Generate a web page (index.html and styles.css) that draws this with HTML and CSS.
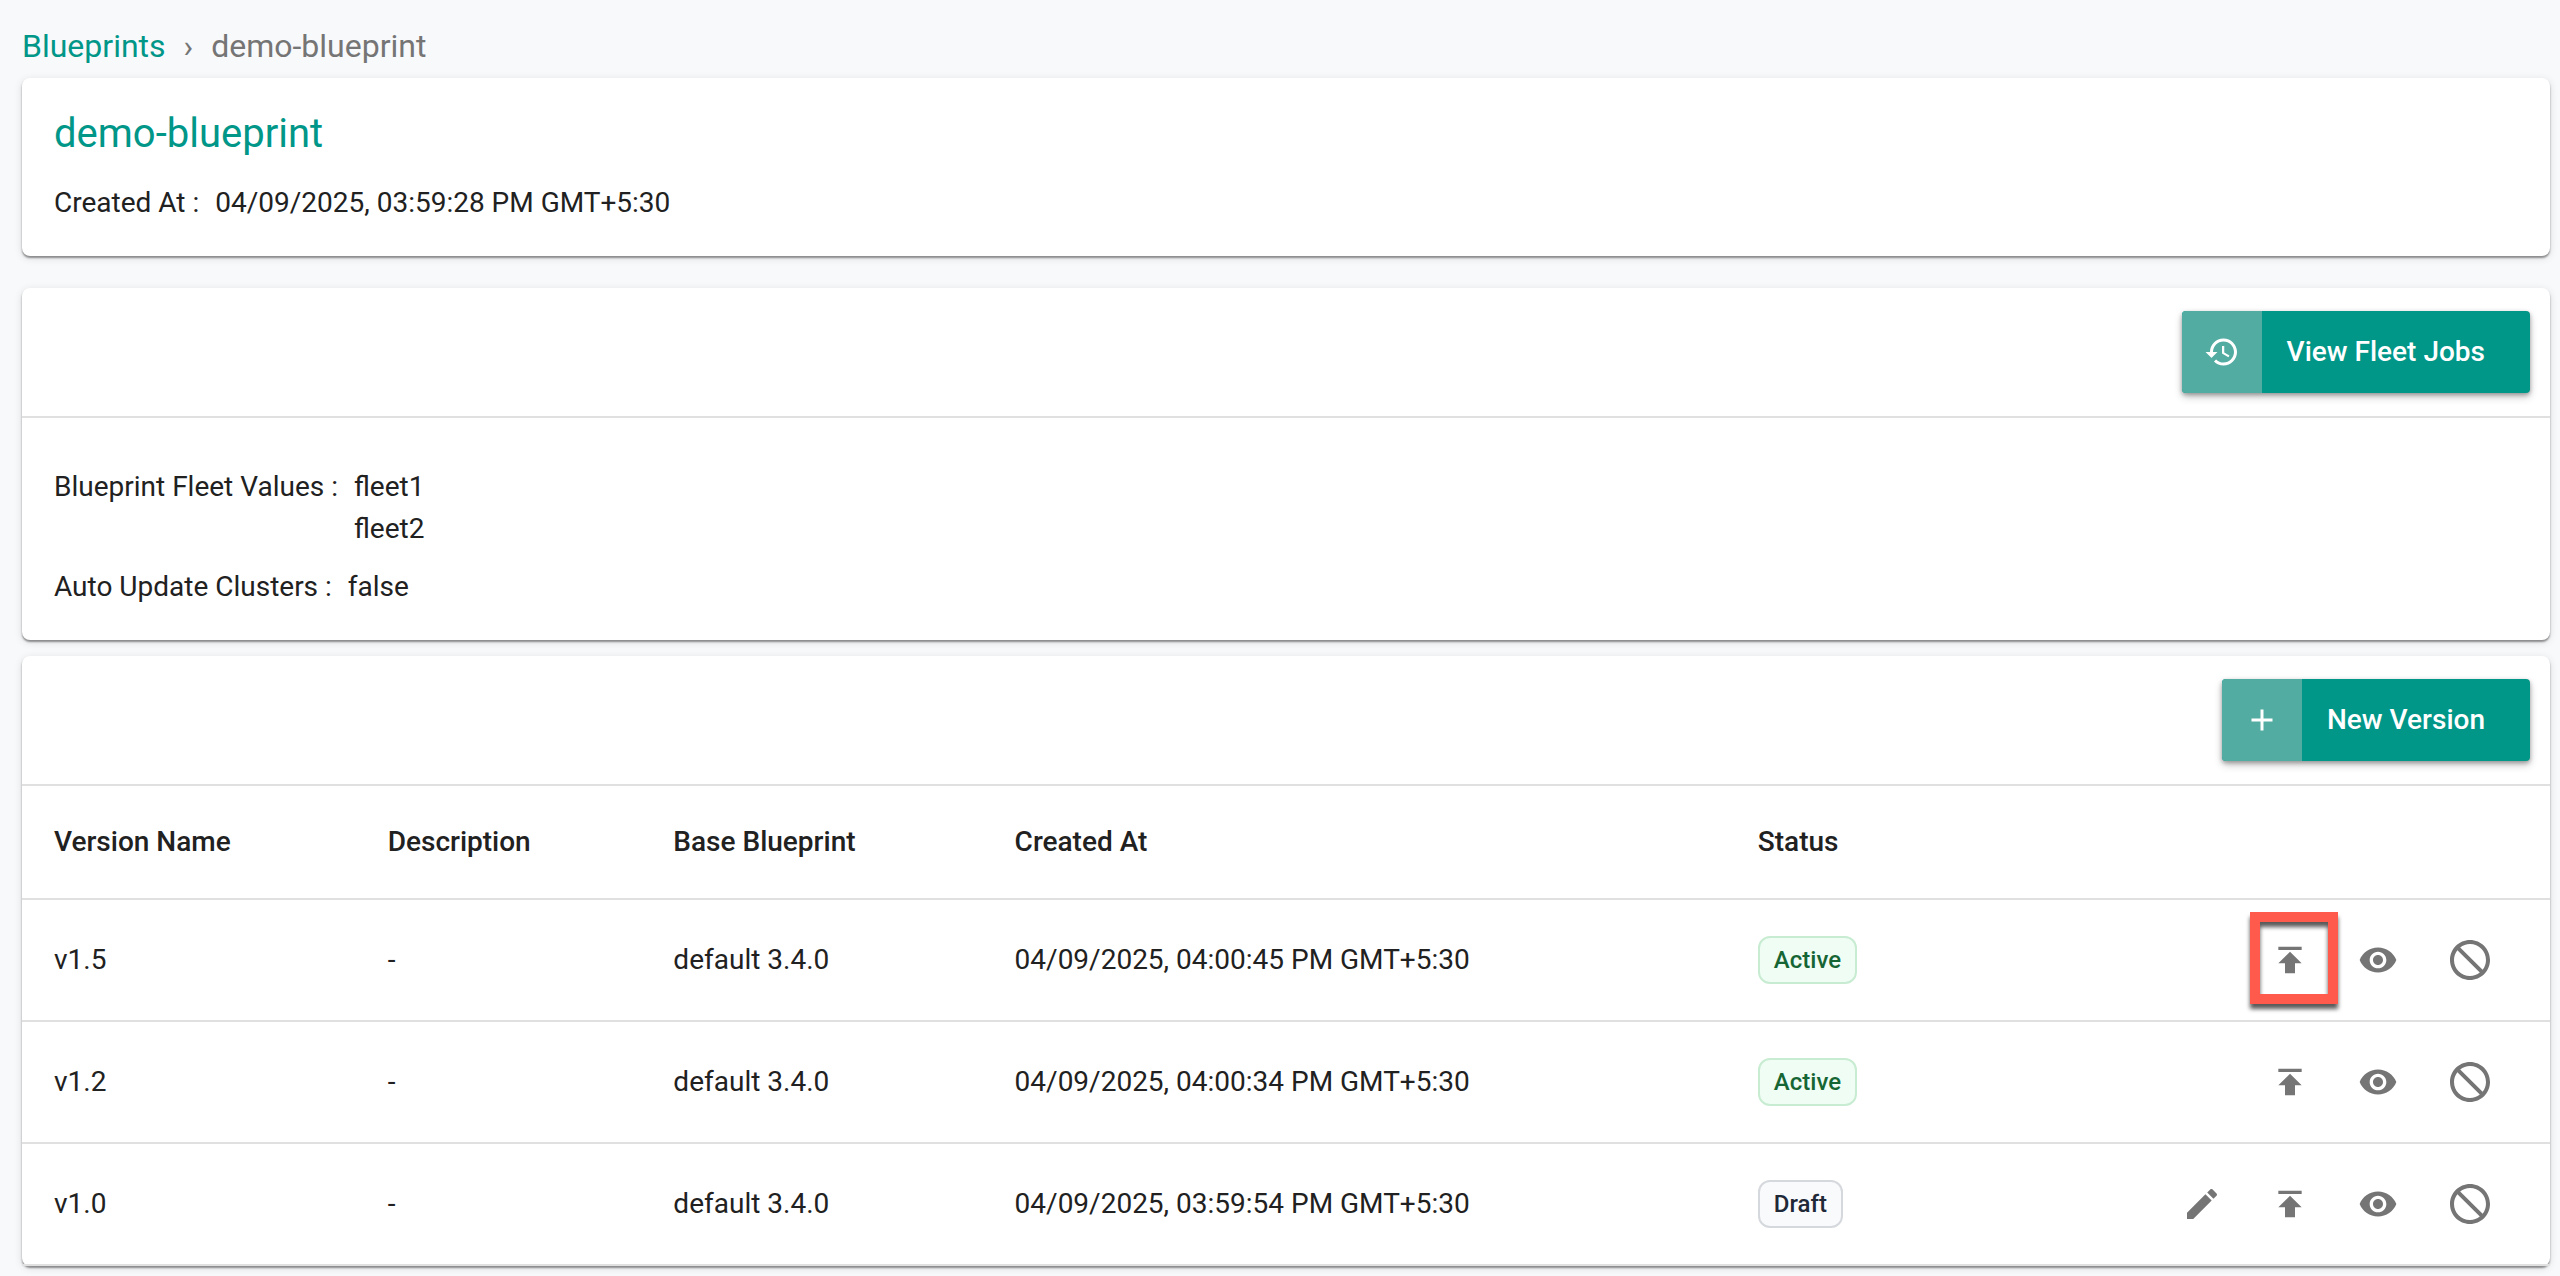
FILE: index.html
```html
<!DOCTYPE html>
<html lang="en">
<head>
    <meta charset="UTF-8">
    <meta name="viewport" content="width=device-width, initial-scale=1.0">
    <title>demo-blueprint</title>
    <link rel="stylesheet" href="styles.css">
</head>
<body>
    <!-- Shared icons -->
    <svg class="sprite" aria-hidden="true">
        <symbol id="icon-history" viewBox="0 0 24 24">
            <path d="M13 3c-4.97 0-9 4.03-9 9H1l3.89 3.89.07.14L9 12H6c0-3.87 3.13-7 7-7s7 3.13 7 7-3.13 7-7 7c-1.93 0-3.68-.79-4.94-2.06l-1.42 1.42C8.27 19.99 10.51 21 13 21c4.97 0 9-4.03 9-9s-4.03-9-9-9zm-1 5v5l4.28 2.54.72-1.21-3.5-2.08V8H12z"/>
        </symbol>
        <symbol id="icon-add" viewBox="0 0 24 24">
            <path d="M19 13h-6v6h-2v-6H5v-2h6V5h2v6h6v2z"/>
        </symbol>
        <symbol id="icon-edit" viewBox="0 0 24 24">
            <path d="M3 17.25V21h3.75L17.81 9.94l-3.75-3.75L3 17.25zM20.71 7.04c.39-.39.39-1.02 0-1.41l-2.34-2.34c-.39-.39-1.02-.39-1.41 0l-1.83 1.83 3.75 3.75 1.83-1.83z"/>
        </symbol>
        <symbol id="icon-publish" viewBox="0 0 24 24">
            <path d="M5 4v2h14V4H5zm0 10h4v6h6v-6h4l-7-7-7 7z"/>
        </symbol>
        <symbol id="icon-view" viewBox="0 0 24 24">
            <path d="M12 4.5C7 4.5 2.73 7.61 1 12c1.73 4.39 6 7.5 11 7.5s9.27-3.11 11-7.5c-1.73-4.39-6-7.5-11-7.5zM12 17c-2.76 0-5-2.24-5-5s2.24-5 5-5 5 2.24 5 5-2.24 5-5 5zm0-8c-1.66 0-3 1.34-3 3s1.34 3 3 3 3-1.34 3-3-1.34-3-3-3z"/>
        </symbol>
        <symbol id="icon-disable" viewBox="0 0 24 24">
            <path d="M12 2C6.48 2 2 6.48 2 12s4.48 10 10 10 10-4.48 10-10S17.52 2 12 2zM4 12c0-1.85.63-3.55 1.69-4.9L16.9 18.31C15.55 19.37 13.85 20 12 20c-4.42 0-8-3.58-8-8zm14.31 4.9L7.1 5.69C8.45 4.63 10.15 4 12 4c4.42 0 8 3.58 8 8 0 1.85-.63 3.55-1.69 4.9z"/>
        </symbol>
    </svg>

    <nav class="breadcrumb" aria-label="Breadcrumb">
        <a href="#">Blueprints</a>
        <span class="separator">›</span>
        <span>demo-blueprint</span>
    </nav>

    <main>
        <section class="card summary">
            <h1>demo-blueprint</h1>
            <dl class="field">
                <dt>Created At :</dt>
                <dd>04/09/2025, 03:59:28 PM GMT+5:30</dd>
            </dl>
        </section>

        <section class="card fleet">
            <div class="toolbar">
                <button type="button" class="btn">
                    <span class="btn-icon"><svg><use href="#icon-history"/></svg></span>
                    <span class="btn-label">View Fleet Jobs</span>
                </button>
            </div>
            <div class="details">
                <dl class="field">
                    <dt>Blueprint Fleet Values :</dt>
                    <dd>fleet1<br>fleet2</dd>
                </dl>
                <dl class="field">
                    <dt>Auto Update Clusters :</dt>
                    <dd>false</dd>
                </dl>
            </div>
        </section>

        <section class="card">
            <div class="toolbar">
                <button type="button" class="btn">
                    <span class="btn-icon"><svg><use href="#icon-add"/></svg></span>
                    <span class="btn-label">New Version</span>
                </button>
            </div>
            <table class="versions">
                <thead>
                    <tr>
                        <th class="col-name">Version Name</th>
                        <th class="col-desc">Description</th>
                        <th class="col-base">Base Blueprint</th>
                        <th class="col-created">Created At</th>
                        <th class="col-status">Status</th>
                        <th class="col-actions"></th>
                    </tr>
                </thead>
                <tbody>
                    <tr>
                        <td>v1.5</td>
                        <td>-</td>
                        <td>default 3.4.0</td>
                        <td>04/09/2025, 04:00:45 PM GMT+5:30</td>
                        <td><span class="badge active">Active</span></td>
                        <td>
                            <div class="actions">
                                <button type="button" class="icon-btn highlight" aria-label="Publish v1.5"><svg><use href="#icon-publish"/></svg></button>
                                <button type="button" class="icon-btn" aria-label="View v1.5"><svg><use href="#icon-view"/></svg></button>
                                <button type="button" class="icon-btn large" aria-label="Disable v1.5"><svg><use href="#icon-disable"/></svg></button>
                            </div>
                        </td>
                    </tr>
                    <tr>
                        <td>v1.2</td>
                        <td>-</td>
                        <td>default 3.4.0</td>
                        <td>04/09/2025, 04:00:34 PM GMT+5:30</td>
                        <td><span class="badge active">Active</span></td>
                        <td>
                            <div class="actions">
                                <button type="button" class="icon-btn" aria-label="Publish v1.2"><svg><use href="#icon-publish"/></svg></button>
                                <button type="button" class="icon-btn" aria-label="View v1.2"><svg><use href="#icon-view"/></svg></button>
                                <button type="button" class="icon-btn large" aria-label="Disable v1.2"><svg><use href="#icon-disable"/></svg></button>
                            </div>
                        </td>
                    </tr>
                    <tr>
                        <td>v1.0</td>
                        <td>-</td>
                        <td>default 3.4.0</td>
                        <td>04/09/2025, 03:59:54 PM GMT+5:30</td>
                        <td><span class="badge draft">Draft</span></td>
                        <td>
                            <div class="actions">
                                <button type="button" class="icon-btn" aria-label="Edit v1.0"><svg><use href="#icon-edit"/></svg></button>
                                <button type="button" class="icon-btn" aria-label="Publish v1.0"><svg><use href="#icon-publish"/></svg></button>
                                <button type="button" class="icon-btn" aria-label="View v1.0"><svg><use href="#icon-view"/></svg></button>
                                <button type="button" class="icon-btn large" aria-label="Disable v1.0"><svg><use href="#icon-disable"/></svg></button>
                            </div>
                        </td>
                    </tr>
                </tbody>
            </table>
        </section>
    </main>
</body>
</html>
```

FILE: styles.css
```css
* {
    box-sizing: border-box;
}

body {
    font-family: Roboto, sans-serif;
    font-size: 28px;
    line-height: 42px;
    color: #212121;
    background-color: #f8f9fb;
    margin: 0;
    padding: 22px 10px 10px 22px;
}

.sprite {
    display: none;
}

.breadcrumb {
    display: flex;
    gap: 18px;
    font-size: 32px;
    line-height: 48px;
    color: #757575;
    margin-bottom: 8px;
}

.breadcrumb a {
    color: #009688;
    text-decoration: none;
}

.card {
    background-color: #ffffff;
    border-radius: 8px;
    box-shadow: 0 2px 2px rgba(0, 0, 0, 0.4), 0 2px 8px rgba(0, 0, 0, 0.12);
    margin-bottom: 16px;
}

.summary {
    padding: 32px;
    margin-bottom: 32px;
}

h1 {
    font-size: 40px;
    font-weight: 400;
    line-height: 48px;
    color: #009688;
    margin: 0 0 24px;
}

.field {
    display: flex;
    gap: 16px;
    margin: 0;
}

.field dd {
    margin: 0;
}

.toolbar {
    display: flex;
    justify-content: flex-end;
    padding: 23px 20px;
    border-bottom: 2px solid #e0e0e0;
}

.btn {
    display: flex;
    padding: 0;
    border: none;
    border-radius: 4px;
    overflow: hidden;
    font-family: inherit;
    font-size: 28px;
    font-weight: 500;
    line-height: 82px;
    color: #ffffff;
    background-color: #009688;
    box-shadow: 0 2px 4px rgba(0, 0, 0, 0.3), 0 4px 8px rgba(0, 0, 0, 0.2);
    cursor: pointer;
}

.btn-icon {
    display: flex;
    align-items: center;
    justify-content: center;
    width: 80px;
    background-color: #52aca2;
}

.btn-icon svg {
    width: 36px;
    height: 36px;
    fill: currentColor;
}

.btn-label {
    padding: 0 45px 0 25px;
}

.details {
    display: flex;
    flex-direction: column;
    gap: 16px;
    padding: 48px 32px 32px;
}

.versions {
    width: 100%;
    table-layout: fixed;
    border-collapse: separate;
    border-spacing: 0;
}

.versions th,
.versions td {
    padding: 16px 32px;
    text-align: left;
    border-bottom: 2px solid #e0e0e0;
}

.versions th {
    height: 114px;
    font-weight: 500;
}

.versions td:last-child {
    padding-left: 0;
}

.col-name {
    width: 13.2%;
}

.col-desc {
    width: 11.3%;
}

.col-base {
    width: 13.5%;
}

.col-created {
    width: 29.4%;
}

.col-status {
    width: 16%;
}

.badge {
    display: inline-block;
    padding: 0 14px;
    border: 2px solid;
    border-radius: 12px;
    font-size: 24px;
    font-weight: 500;
    line-height: 44px;
    vertical-align: middle;
}

.badge.active {
    color: #166534;
    background-color: #f0fdf4;
    border-color: #c8ecd2;
}

.badge.draft {
    color: #1f2937;
    background-color: #f9fafb;
    border-color: #d5d8dc;
}

.actions {
    display: flex;
    align-items: center;
    justify-content: flex-end;
}

.icon-btn {
    display: flex;
    position: relative;
    padding: 24px;
    border: none;
    background: none;
    color: #757575;
    cursor: pointer;
}

.icon-btn svg {
    width: 40px;
    height: 40px;
    fill: currentColor;
}

.icon-btn.large {
    padding: 20px 24px;
}

.icon-btn.large svg {
    width: 48px;
    height: 48px;
}

/* Callout frame over the publish button */
.highlight::after {
    content: "";
    position: absolute;
    box-sizing: border-box;
    top: -4px;
    left: 4px;
    width: 88px;
    height: 92px;
    border: 10px solid #ff5a4b;
    filter: drop-shadow(0 5px 2px rgba(0, 0, 0, 0.65));
}
```
